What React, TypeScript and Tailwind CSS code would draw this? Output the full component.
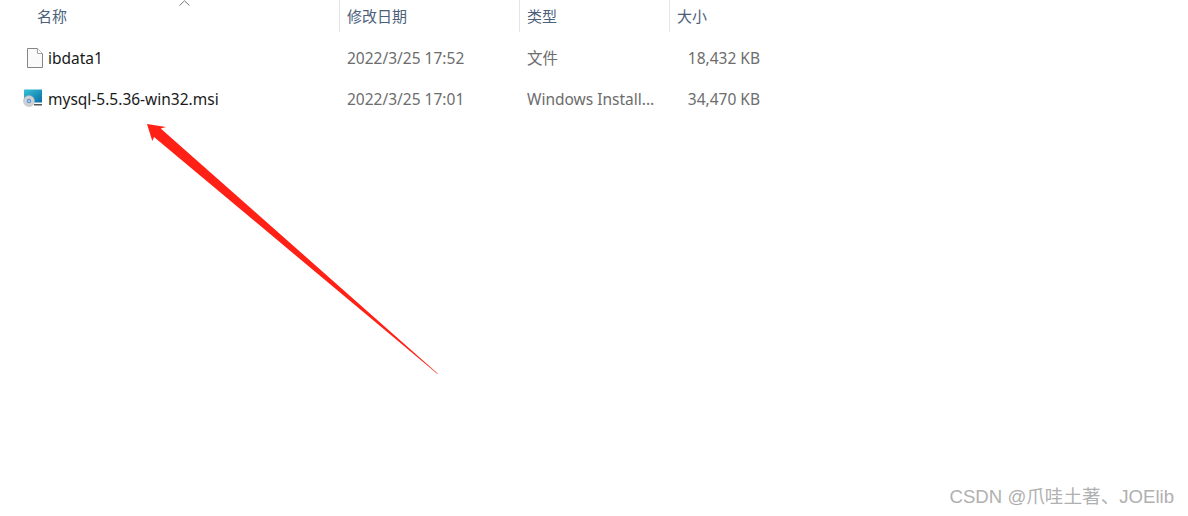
const columns = [
  { label: '修改日期', width: 'w-[180px]' },
  { label: '类型', width: 'w-[150px]' },
  { label: '大小', width: 'w-[100px]' }
]

const files = [
  { name: 'ibdata1', date: '2022/3/25 17:52', type: '文件', size: '18,432 KB', icon: 'file' },
  { name: 'mysql-5.5.36-win32.msi', date: '2022/3/25 17:01', type: 'Windows Install...', size: '34,470 KB', icon: 'msi' }
]

const FileIcon = () => (
  <svg width="16" height="20" viewBox="0 0 16 20">
    <path d="M.5.5h10l5 5v14H.5z" fill="#fafafa" stroke="#858585" />
    <path d="M10.5.5v5h5" fill="#fff" stroke="#a0a0a0" />
  </svg>
)

const MsiIcon = () => (
  <svg width="20" height="20" viewBox="0 0 20 20">
    <defs>
      <linearGradient id="screen" x1="0" y1="0" x2="1" y2="1">
        <stop offset="0" stopColor="#35c3d6" />
        <stop offset="1" stopColor="#0a6ca6" />
      </linearGradient>
    </defs>
    <rect x="1" y="0.5" width="18" height="13" fill="url(#screen)" />
    <rect x="11" y="15" width="8" height="1.5" fill="#555" />
    <circle cx="6" cy="12" r="5.5" fill="#cfd2d5" stroke="#b0b3b6" strokeWidth="0.5" />
    <circle cx="6" cy="12" r="2.2" fill="#5f96d6" />
    <circle cx="6" cy="12" r="0.8" fill="#fff" />
  </svg>
)

export default function App() {
  return (
    <div className="relative w-[1188px] h-[516px] overflow-hidden bg-white font-['Noto_Sans','Noto_Sans_CJK_SC',sans-serif] text-[15.5px]">
      <div className="relative flex w-[770px] h-8 text-[#4c607a] font-['Noto_Sans_CJK_SC',sans-serif] text-[15px]">
        <div className="w-[339px] pl-[37px] leading-[31px]">名称</div>
        {columns.map(col => (
          <div
            key={col.label}
            className={`${col.width} pl-[7px] leading-[31px] border-l border-[#e5e5e5] last:border-r`}>
            {col.label}
          </div>
        ))}
        <svg
          className="absolute left-[179px] top-0"
          width="11"
          height="6"
          viewBox="0 0 11 6">
          <path d="M.5 5.5 5.5.8l5 4.7" fill="none" stroke="#7a7a7a" />
        </svg>
      </div>
      <div className="flex flex-col pt-[6px] w-[770px]">
        {files.map(file => (
          <div key={file.name} className="flex items-center h-[41px]">
            <div className="w-[340px] flex items-center">
              <div className="w-[48px] flex justify-end pr-[5px] -mt-[1px]">
                {file.icon === 'file' ? <FileIcon /> : <MsiIcon />}
              </div>
              <span className="text-[#1a1a1a]">{file.name}</span>
            </div>
            <div className="w-[180px] pl-[7px] text-[#6d6d6d]">{file.date}</div>
            <div className="w-[150px] pl-[7px] text-[#6d6d6d]">{file.type}</div>
            <div className="w-[100px] pr-[10px] text-right text-[#6d6d6d]">{file.size}</div>
          </div>
        ))}
      </div>
      <svg
        className="absolute left-0 top-0 pointer-events-none"
        width="1188"
        height="516"
        viewBox="0 0 1188 516">
        <path
          d="M147 124 166 127 160.7 128.5 438 373.7 437.5 374 154 137 152.3 141z"
          fill="#ff2116"
        />
      </svg>
      <div className="absolute right-[14px] bottom-[5px] text-[18.6px] text-[#b0b0b0] font-['Liberation_Sans','Noto_Sans_CJK_SC',sans-serif]">
        CSDN @爪哇土著、JOElib
      </div>
    </div>
  )
}
